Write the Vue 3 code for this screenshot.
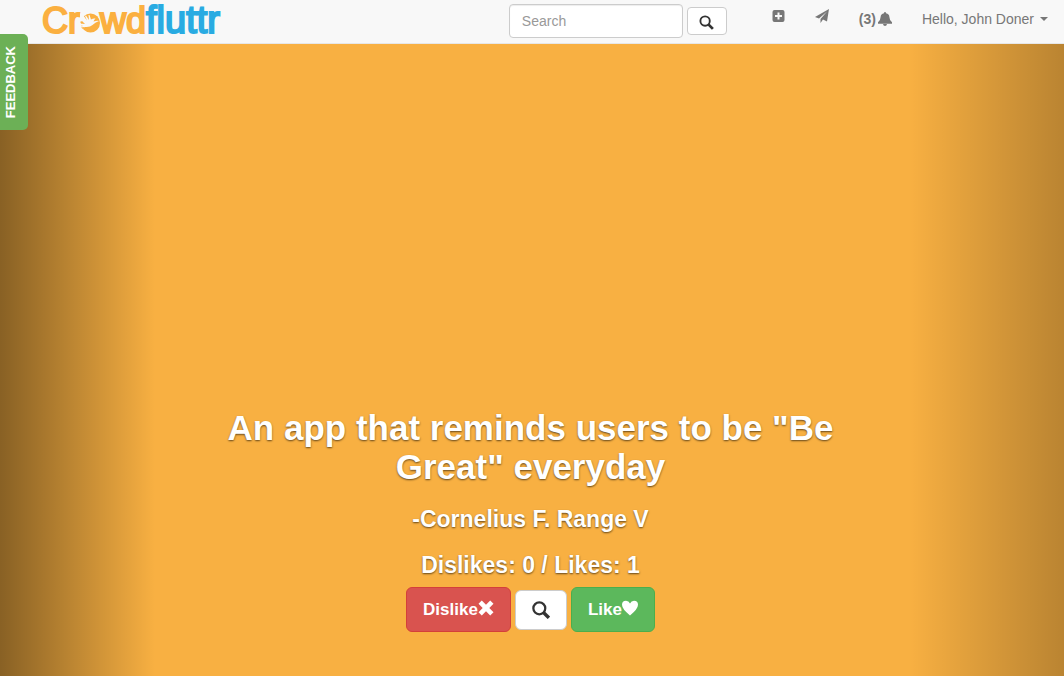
<script setup>
import { ref } from 'vue'

const query = ref('')
const unread = ref(3)
const likes = ref(1)
const dislikes = ref(0)
</script>

<template>
  <div class="page">
    <header class="navbar">
      <a class="brand" href="#" aria-label="Crowdfluttr">
        <span class="crowd">Cr</span>
        <svg class="bird" viewBox="0 0 20 20" aria-hidden="true">
          <circle cx="10.5" cy="10" r="9.5" />
          <path class="wing" d="M0 0L3 2L7 7.5L5 3L6 2.5L9 7L8.5 2H9.5L11 6.5Q13 5 15.5 5.5Q14 7 13.5 8.5Q17 7.5 19 8Q15 9.5 12.5 12Q10 14.5 5 14L1 17L0 14L3 13L0 12V10.5L5 11L2 8L0 8Z" />
          <path d="M0 8.5L3 9.5L1 10.5ZM1 14.5L5 14L3 16Z" />
        </svg>
        <span class="crowd">wd</span><span class="fluttr">fluttr</span>
      </a>

      <form class="search" role="search" @submit.prevent>
        <input v-model="query" type="text" placeholder="Search" aria-label="Search">
        <button class="search-button" type="submit" aria-label="Submit search">
          <svg viewBox="0 0 16 16" aria-hidden="true"><circle cx="6.5" cy="6.5" r="5" /><path d="M10 10 L14.8 14.8" /></svg>
        </button>
      </form>

      <nav class="links">
        <a href="#" aria-label="Add idea">
          <svg class="plus" viewBox="0 0 12 12" aria-hidden="true"><path fill-rule="evenodd" d="M2 0H10Q12 0 12 2V10Q12 12 10 12H2Q0 12 0 10V2Q0 0 2 0ZM5 2.5V5H2.5V7H5V9.5H7V7H9.5V5H7V2.5Z" /></svg>
        </a>
        <a href="#" aria-label="Messages">
          <svg class="plane" viewBox="0 0 14 14" aria-hidden="true"><path d="M14 0L12 12.5L8 10.5L5.5 14V10L12 2.5L4 9.5L0 8Z" /></svg>
        </a>
        <a class="alerts" href="#">
          <b>({{ unread }})</b>
          <svg class="bell" viewBox="0 0 14 14" aria-hidden="true"><path d="M7 0Q8 0 8 1.3Q11.2 2 11.4 5Q11.5 8.5 14 10.2V11.7H0V10.2Q2.5 8.5 2.6 5Q2.8 2 6 1.3Q6 0 7 0ZM5 12H9Q8.7 14 7 14Q5.3 14 5 12Z" /></svg>
        </a>
        <a class="account" href="#">Hello, John Doner <span class="caret"></span></a>
      </nav>
    </header>

    <button class="feedback" type="button">FEEDBACK</button>

    <main class="stage">
      <button class="shade previous" type="button" aria-label="Previous"></button>
      <section class="caption">
        <h1>An app that reminds users to be "Be Great" everyday</h1>
        <h2>-Cornelius F. Range V</h2>
        <h2>Dislikes: {{ dislikes }} / Likes: {{ likes }}</h2>
        <div class="actions">
          <button class="vote dislike" type="button" @click="dislikes++">
            Dislike<svg viewBox="0 0 16 16" aria-hidden="true"><path d="M3.8 0.5L8 4.7L12.2 0.5L15.5 3.8L11.3 8L15.5 12.2L12.2 15.5L8 11.3L3.8 15.5L0.5 12.2L4.7 8L0.5 3.8Z" /></svg>
          </button>
          <button class="details" type="button" aria-label="View details">
            <svg viewBox="0 0 16 16" aria-hidden="true"><circle cx="6.5" cy="6.5" r="5.3" /><path d="M10.2 10.2L15 15" /></svg>
          </button>
          <button class="vote like" type="button" @click="likes++">
            Like<svg viewBox="0 0 16 16" aria-hidden="true"><path d="M8 15.5Q0 9 0 4.8Q0 .7 4 .7Q6.8 .7 8 3.5Q9.2 .7 12 .7Q16 .7 16 4.8Q16 9 8 15.5Z" /></svg>
          </button>
        </div>
      </section>
      <button class="shade next" type="button" aria-label="Next"></button>
    </main>
  </div>
</template>

<style>
body {
  margin: 0;
}
</style>

<style scoped>
.page,
.page * {
  box-sizing: border-box;
}

.page {
  position: relative;
  display: flex;
  flex-direction: column;
  min-height: 100vh;
  font: 14px/20px "Liberation Sans", Arial, sans-serif;
  color: #777;
}

button,
input {
  font: inherit;
  margin: 0;
}

a {
  color: inherit;
  text-decoration: none;
}

.navbar {
  display: flex;
  align-items: flex-start;
  height: 44px;
  padding: 0 16px 0 42px;
  background: #f8f8f8;
  border-bottom: 1px solid #e7e7e7;
}

.brand {
  display: flex;
  align-items: baseline;
  line-height: 40px;
  white-space: nowrap;
}

.crowd {
  color: #fbb040;
  font-size: 36px;
  -webkit-text-stroke: 2px #fbb040;
}

.fluttr {
  color: #29abe2;
  font-size: 38px;
  -webkit-text-stroke: 2px #29abe2;
}

.bird {
  width: 20px;
  height: 20px;
  fill: #fbb040;
}

.wing {
  fill: #f8f8f8;
}

.search {
  display: flex;
  align-items: center;
  gap: 4px;
  margin: 4px 0 0 auto;
}

.search input {
  width: 174px;
  height: 34px;
  padding: 6px 12px;
  border: 1px solid #ccc;
  border-radius: 4px;
  background: #fff;
  color: #555;
  box-shadow: inset 0 1px 1px rgba(0, 0, 0, 0.075);
}

.search input::placeholder {
  color: #999;
}

.search-button {
  display: flex;
  align-items: center;
  justify-content: center;
  width: 40px;
  height: 28px;
  padding: 2px 0 0;
  border: 1px solid #ccc;
  border-radius: 4px;
  background: #fff;
}

.search-button svg,
.details svg {
  width: 15px;
  height: 15px;
  fill: none;
  stroke: #333;
  stroke-width: 2;
}

.search-button path,
.details path {
  stroke-width: 3;
}

.links {
  display: flex;
  align-items: flex-start;
  gap: 30px;
  margin-left: 45px;
  padding-top: 9px;
}

.links svg {
  display: block;
  fill: #777;
}

.plus {
  width: 13px;
  height: 12px;
  margin-top: 1px;
}

.plane,
.bell {
  width: 14px;
  height: 14px;
}

.alerts {
  display: flex;
  align-items: center;
  gap: 2px;
}

.alerts b {
  font-weight: 700;
}

.account {
  display: flex;
  align-items: center;
  gap: 6px;
  white-space: nowrap;
}

.caret {
  border: 4px solid transparent;
  border-top-color: #777;
  border-bottom: 0;
}

.feedback {
  position: absolute;
  z-index: 2;
  top: 34px;
  left: 0;
  width: 28px;
  height: 96px;
  padding: 0 6px 0 0;
  border: 0;
  border-radius: 0 5px 5px 0;
  background: #6cb056;
  color: #fff;
  font-size: 13px;
  font-weight: 700;
  line-height: 22px;
  writing-mode: sideways-lr;
}

.stage {
  position: relative;
  display: flex;
  flex: 1;
  align-items: flex-end;
  justify-content: center;
  padding-right: 3px;
  background: #f8b042;
}

.shade {
  position: absolute;
  top: 0;
  bottom: 0;
  width: 15%;
  padding: 0;
  border: 0;
}

.previous {
  left: 0;
  background: linear-gradient(to right, rgba(0, 0, 0, 0.45), transparent 97%);
}

.next {
  right: 0;
  background: linear-gradient(to left, rgba(0, 0, 0, 0.25), transparent 97%);
}

.caption {
  width: 60%;
  padding-bottom: 44px;
  color: #fff;
  text-align: center;
  text-shadow: 0 1px 2px rgba(0, 0, 0, 0.6);
}

h1,
h2 {
  margin: 0 0 20px;
  font-weight: 700;
}

h1 {
  font-size: 35px;
  line-height: 39px;
}

h2 {
  font-size: 23px;
  line-height: 26px;
}

h2 + h2 {
  margin-bottom: 9px;
}

.actions {
  display: flex;
  align-items: center;
  justify-content: center;
  gap: 4px;
}

.vote {
  display: flex;
  align-items: center;
  height: 45px;
  padding: 0 16px;
  border: 1px solid;
  border-radius: 6px;
  color: #fff;
  font-size: 17px;
  font-weight: 700;
}

.vote svg {
  width: 16px;
  height: 16px;
  margin-bottom: 4px;
  fill: #fff;
}

.dislike {
  background: #d9534f;
  border-color: #d43f3a;
}

.like {
  background: #5cb85c;
  border-color: #4cae4c;
}

.details {
  display: flex;
  align-items: center;
  justify-content: center;
  width: 52px;
  height: 40px;
  padding: 0;
  border: 1px solid #ccc;
  border-radius: 6px;
  background: #fff;
}

.details svg {
  width: 18px;
  height: 18px;
}
</style>
